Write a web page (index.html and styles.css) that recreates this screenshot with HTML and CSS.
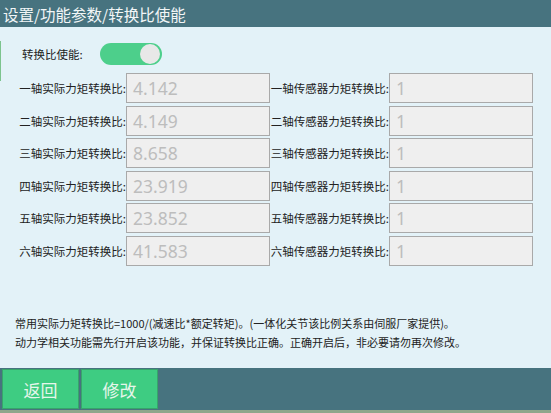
FILE: index.html
```html
<!DOCTYPE html>
<html lang="zh-CN">
<head>
    <meta charset="utf-8" />
    <title>转换比使能</title>
    <link rel="stylesheet" href="styles.css">
</head>
<body>
<div class="screen">
    <div class="title">设置/功能参数/转换比使能</div>

    <div class="panel">
        <div class="switch-row">
            <span class="switch-label">转换比使能:</span>
            <span class="switch on"><span class="knob"></span></span>
        </div>

        <div class="ratios">
            <span class="label">一轴实际力矩转换比:</span>
            <span class="field">4.142</span>
            <span class="label">一轴传感器力矩转换比:</span>
            <span class="field">1</span>

            <span class="label">二轴实际力矩转换比:</span>
            <span class="field">4.149</span>
            <span class="label">二轴传感器力矩转换比:</span>
            <span class="field">1</span>

            <span class="label">三轴实际力矩转换比:</span>
            <span class="field">8.658</span>
            <span class="label">三轴传感器力矩转换比:</span>
            <span class="field">1</span>

            <span class="label">四轴实际力矩转换比:</span>
            <span class="field">23.919</span>
            <span class="label">四轴传感器力矩转换比:</span>
            <span class="field">1</span>

            <span class="label">五轴实际力矩转换比:</span>
            <span class="field">23.852</span>
            <span class="label">五轴传感器力矩转换比:</span>
            <span class="field">1</span>

            <span class="label">六轴实际力矩转换比:</span>
            <span class="field">41.583</span>
            <span class="label">六轴传感器力矩转换比:</span>
            <span class="field">1</span>
        </div>

        <div class="notes">
            <p>常用实际力矩转换比=1000/(减速比*额定转矩)。(一体化关节该比例关系由伺服厂家提供)。</p>
            <p>动力学相关功能需先行开启该功能，并保证转换比正确。正确开启后，非必要请勿再次修改。</p>
        </div>
    </div>

    <div class="bar">
        <button class="btn">返回</button>
        <button class="btn">修改</button>
    </div>
    <div class="under"></div>
</div>
</body>
</html>
```

FILE: styles.css
```css
html, body {
    margin: 0;
    height: 100%;
}
body {
    overflow: hidden;
    font-family: "Noto Sans CJK SC", "Noto Sans", sans-serif;
    background: #e3f2f8;
    color: #222;
}
.screen {
    display: flex;
    flex-direction: column;
    height: 413px;
}

.title {
    height: 27px;
    line-height: 28px;
    padding-left: 3px;
    background: #47737f;
    color: #f2f6f7;
    font-size: 15.5px;
}

.panel {
    flex: 1;
    display: flex;
    flex-direction: column;
    padding-left: 2px;
    background:
        linear-gradient(#7cc48e, #7cc48e) 0 14px / 1px 40px no-repeat,
        #e3f2f8;
}

.switch-row {
    display: flex;
    align-items: center;
    gap: 17px;
    height: 22px;
    margin-top: 16px;
    padding-left: 20px;
    font-size: 11.5px;
}
.switch {
    width: 62px;
    height: 22px;
    border-radius: 11px;
    background: #4dcf8b;
    display: flex;
    align-items: center;
    justify-content: flex-end;
    padding-right: 2px;
    box-sizing: border-box;
}
.knob {
    width: 20px;
    height: 20px;
    border-radius: 50%;
    background: #e8e8e8;
}

.ratios {
    display: grid;
    grid-template-columns: 124px 144px 119px 144px;
    grid-auto-rows: 30px;
    row-gap: 2.6px;
    margin-top: 8px;
}
.label {
    display: flex;
    align-items: center;
    justify-content: flex-end;
    font-size: 11.5px;
    white-space: nowrap;
}
.field {
    display: flex;
    align-items: center;
    padding-left: 6px;
    box-sizing: border-box;
    background: #efefef;
    border: 1px solid #a9a9a9;
    color: #bdbdbd;
    font-family: "Noto Sans", sans-serif;
    font-size: 17.5px;
}

.notes {
    margin-top: auto;
    margin-bottom: 16px;
    padding-left: 13px;
    font-size: 11px;
    line-height: 19px;
}
.notes p {
    margin: 0;
}

.bar {
    display: flex;
    gap: 2px;
    height: 42px;
    padding: 1px 2px 0;
    box-sizing: border-box;
    background: #47737f;
}
.btn {
    width: 77px;
    height: 40px;
    margin: 0;
    background: #3ecc82;
    border: 1px solid #37a56a;
    color: #e6f6eb;
    font-family: "Noto Sans CJK SC", sans-serif;
    font-size: 17px;
}

.under {
    height: 3px;
    background: #8ea68c;
}
```
